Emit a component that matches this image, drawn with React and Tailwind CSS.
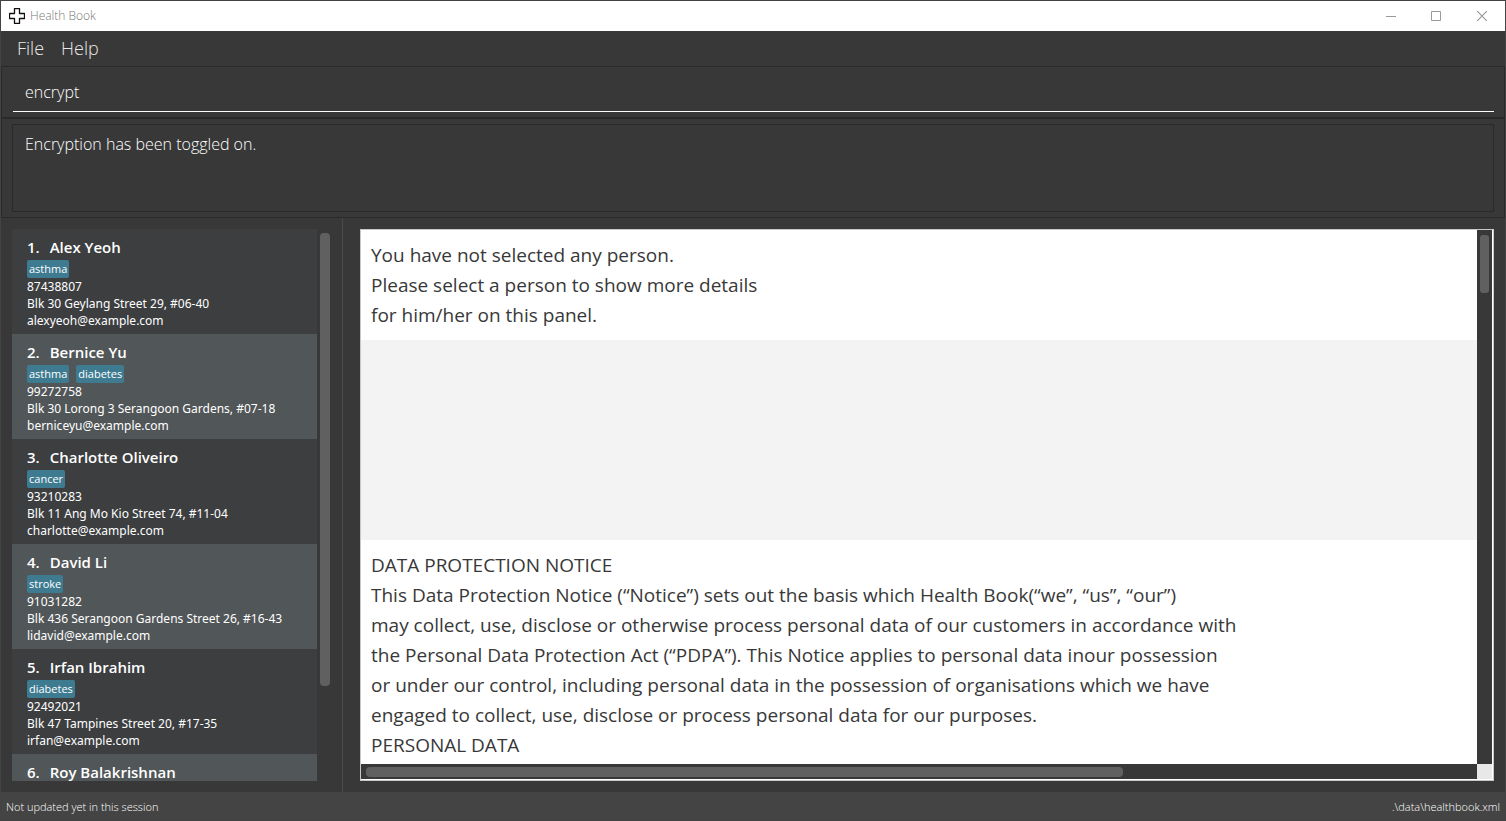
const persons = [
  { name: 'Alex Yeoh', tags: ['asthma'], phone: '87438807', address: 'Blk 30 Geylang Street 29, #06-40', email: 'alexyeoh@example.com' },
  { name: 'Bernice Yu', tags: ['asthma', 'diabetes'], phone: '99272758', address: 'Blk 30 Lorong 3 Serangoon Gardens, #07-18', email: 'berniceyu@example.com' },
  { name: 'Charlotte Oliveiro', tags: ['cancer'], phone: '93210283', address: 'Blk 11 Ang Mo Kio Street 74, #11-04', email: 'charlotte@example.com' },
  { name: 'David Li', tags: ['stroke'], phone: '91031282', address: 'Blk 436 Serangoon Gardens Street 26, #16-43', email: 'lidavid@example.com' },
  { name: 'Irfan Ibrahim', tags: ['diabetes'], phone: '92492021', address: 'Blk 47 Tampines Street 20, #17-35', email: 'irfan@example.com' },
  { name: 'Roy Balakrishnan', tags: [], phone: '', address: '', email: '' },
];

const notice = [
  'DATA PROTECTION NOTICE',
  'This Data Protection Notice (“Notice”) sets out the basis which Health Book(“we”, “us”, “our”)',
  'may collect, use, disclose or otherwise process personal data of our customers in accordance with',
  'the Personal Data Protection Act (“PDPA”). This Notice applies to personal data inour possession',
  'or under our control, including personal data in the possession of organisations which we have',
  'engaged to collect, use, disclose or process personal data for our purposes.',
  'PERSONAL DATA',
];

function TitleBar() {
  return (
    <header className="flex h-[30px] shrink-0 items-center bg-white pl-2 text-[#999999]">
      <svg className="h-4 w-4" viewBox="0 0 16 16" aria-hidden="true">
        <path d="M5.5 .5h5v5h5v5h-5v5h-5v-5h-5v-5h5z" fill="#fff" stroke="#111" strokeWidth="1.3" strokeLinejoin="round" />
      </svg>
      <h1 className="ml-[5px] flex-1 text-[12px] leading-4 font-light text-[#777777]">Health Book</h1>
      <button type="button" aria-label="Minimize" className="flex h-full w-[46px] items-center justify-center">
        <svg className="h-[10px] w-[10px] overflow-visible" viewBox="0 0 10 10"><path d="M1 5.5h10" stroke="currentColor" /></svg>
      </button>
      <button type="button" aria-label="Maximize" className="flex h-full w-[46px] items-center justify-center">
        <svg className="h-[10px] w-[10px]" viewBox="0 0 10 10"><path d="M.5 .5h9v9h-9z" fill="none" stroke="currentColor" /></svg>
      </button>
      <button type="button" aria-label="Close" className="flex h-full w-[46px] items-center justify-center">
        <svg className="h-[10px] w-[10px]" viewBox="0 0 10 10"><path d="M0 0l10 10M10 0L0 10" stroke="currentColor" strokeWidth="1.2" /></svg>
      </button>
    </header>
  );
}

function PersonRow({ index, person }) {
  return (
    <li className="h-[105px] shrink-0 px-[15px] pt-2 text-[12px] leading-[17px] odd:bg-[#3c3e3f] even:bg-[#515658]">
      <h2 className="flex gap-[10px] text-[15px] leading-5 font-semibold">
        <span>{index}.</span>
        <span>{person.name}</span>
      </h2>
      <div className="mt-[3px] flex h-[18px] gap-[7px]">
        {person.tags.map((tag) => (
          <span key={tag} className="rounded-[2px] bg-[#3e7b91] px-[2px] text-[11px] leading-[18px]">{tag}</span>
        ))}
      </div>
      <div className="font-['Noto_Sans','Open_Sans',sans-serif]">
        <p>{person.phone}</p>
        <p>{person.address}</p>
        <p>{person.email}</p>
      </div>
    </li>
  );
}

export default function App() {
  return (
    <div className="flex h-screen flex-col overflow-hidden border border-[#434343] bg-[#383838] font-['Open_Sans','Noto_Sans',sans-serif] text-white">
      <TitleBar />
      <nav className="flex h-[35px] shrink-0 items-start gap-[17px] px-4 pt-1 text-[18px] leading-[26px] font-light text-[#e8e8e8]">
        <button type="button">File</button>
        <button type="button">Help</button>
      </nav>
      <section className="h-[52px] shrink-0 border border-[#2a2a2a] pt-[5px] pr-[10px] pl-[11px]">
        <input
          aria-label="Command"
          defaultValue="encrypt"
          className="block h-10 w-full border-b border-white bg-transparent px-3 text-[16px] font-light outline-none"
        />
      </section>
      <section className="h-[100px] shrink-0 border border-[#2a2a2a] px-[10px] py-[5px]">
        <div className="h-full border border-[#2a2a2a] px-3 pt-[7px] text-[16px] leading-6 font-light">
          Encryption has been toggled on.
        </div>
      </section>
      <main className="flex min-h-0 flex-1">
        <section className="flex w-[342px] shrink-0 border-r border-[#4b4b4b] py-[11px] pl-[11px]">
          <ol className="flex w-[305px] flex-col overflow-hidden">
            {persons.map((person, i) => (
              <PersonRow key={person.name} index={i + 1} person={person} />
            ))}
          </ol>
          <div className="ml-[3px] flex w-[10px] flex-col pt-1">
            <div className="h-[82.7%] rounded-[4px] bg-[#606060]" />
          </div>
        </section>
        <section className="min-w-0 flex-1 py-[11px] pr-[11px] pl-[17px]">
          <div className="grid h-full grid-cols-[minmax(0,1fr)_15px] grid-rows-[minmax(0,1fr)_15px] border border-[#c8c8c8] bg-white pr-px pb-px">
            <article className="overflow-hidden text-[19px] leading-[30px] whitespace-nowrap text-[#383838]">
              <div className="p-[10px]">
                <p>You have not selected any person.</p>
                <p>Please select a person to show more details</p>
                <p>for him/her on this panel.</p>
              </div>
              <div className="h-[200px] bg-[#f3f3f3]" />
              <div className="p-[10px]">
                {notice.map((line) => (
                  <p key={line}>{line}</p>
                ))}
              </div>
            </article>
            <div className="bg-[#383838] px-[3px] pt-[5px]">
              <div className="h-[58px] w-full rounded-[3px] bg-[#606060]" />
            </div>
            <div className="bg-[#383838] px-[5px] py-[3px]">
              <div className="h-[10px] w-[68.4%] rounded-[4px] bg-[#606060]" />
            </div>
            <div className="bg-[#e8e8e8]" />
          </div>
        </section>
      </main>
      <footer className="flex h-7 shrink-0 items-center justify-between bg-[#444444] px-[5px] pt-px text-[11px] leading-4 font-light">
        <span>Not updated yet in this session</span>
        <span>.\data\healthbook.xml</span>
      </footer>
    </div>
  );
}
